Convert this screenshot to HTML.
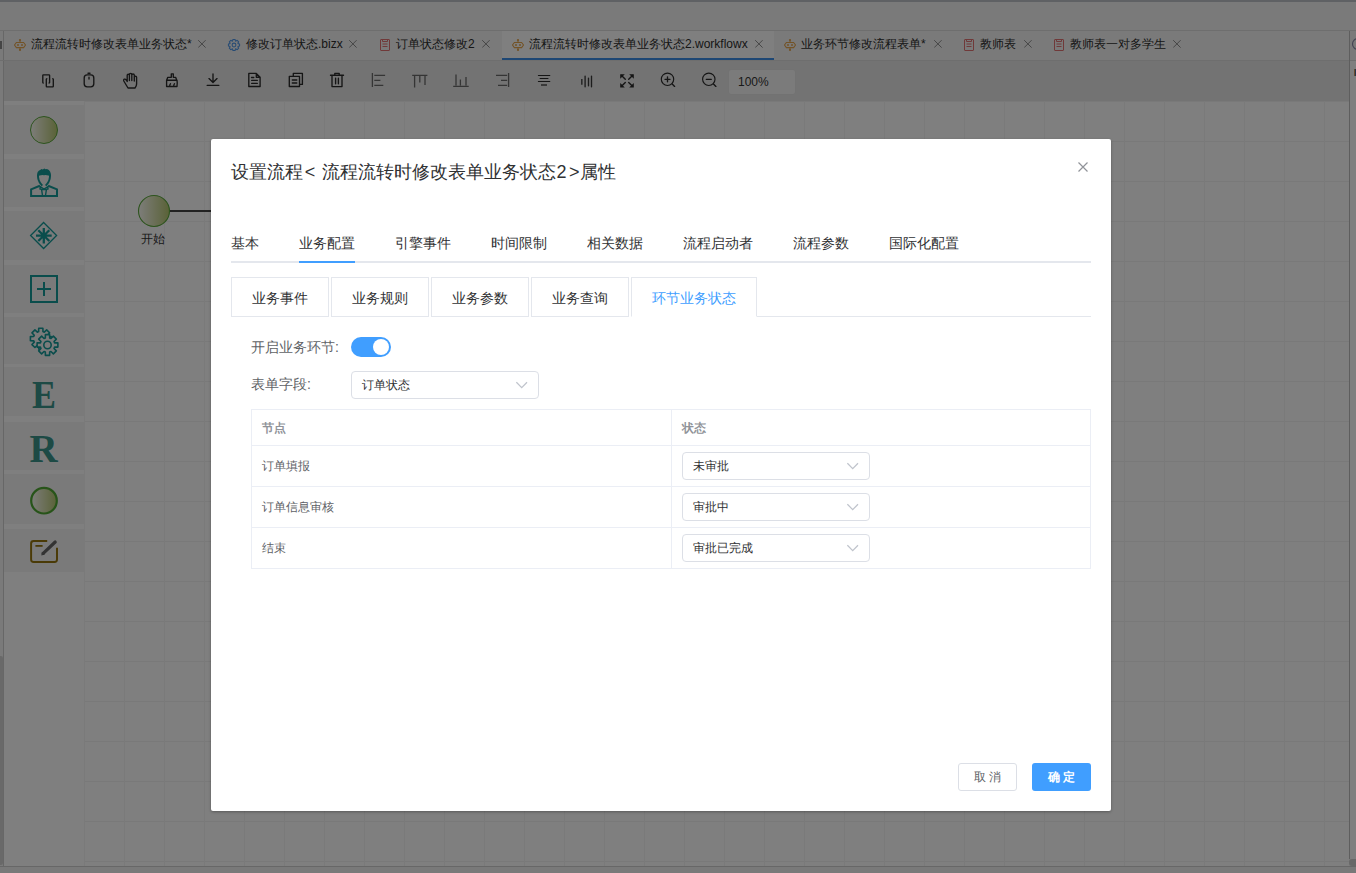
<!DOCTYPE html>
<html><head><meta charset="utf-8">
<style>
*{box-sizing:border-box;margin:0;padding:0}
html,body{width:1356px;height:873px;overflow:hidden;background:#fff;font-family:"Liberation Sans",sans-serif;}
.a{position:absolute}
#app{position:absolute;left:0;top:0;width:1356px;height:873px;background:#f5f5f5}
.tab{position:absolute;top:31px;height:29px;font-size:13px;color:#333;white-space:nowrap;line-height:29px}
.tab .t{position:absolute;top:0}
.tab .x{position:absolute;top:10px;width:9px;height:9px}
.tt{font-size:12px;color:#2e2e2e;white-space:nowrap;line-height:18px}
.tb{position:absolute;top:73px;width:16px;height:16px}
.grid{position:absolute;left:4px;top:101px;width:1345px;height:766px;background-color:#fff;
 background-image:linear-gradient(to right,#f4f4f4 1px,transparent 1px),linear-gradient(to bottom,#f2f2f2 1px,transparent 1px);
 background-size:40px 40px;background-position:0px 0px}
.pal{position:absolute;left:4px;top:101px;width:80px;height:766px;background:#fefefe}
.pi{position:absolute;left:4px;width:80px;height:48px;background:#f4f4f4}
#mask{position:absolute;left:0;top:0;width:1356px;height:873px;background:rgba(0,0,0,.5)}
#dlg{position:absolute;left:211px;top:139px;width:900px;height:672px;background:#fff;border-radius:2px;box-shadow:0 1px 3px rgba(0,0,0,.3)}
.mt{position:absolute;top:94px;font-size:14px;color:#303133;line-height:20px;white-space:nowrap}
.st{position:absolute;top:138px;height:40px;border:1px solid #e4e7ed;font-size:14px;color:#303133;line-height:40px;text-align:center;white-space:nowrap}
.lbl{position:absolute;font-size:14px;color:#606266;white-space:nowrap}
.sel{position:absolute;width:188px;height:28px;border:1px solid #dcdfe6;border-radius:4px;background:#fff;font-size:12px;color:#303133;line-height:26px;padding-left:10px;white-space:nowrap}
.sel svg{position:absolute;right:10px;top:9px}
.cell{position:absolute;font-size:12px;color:#606266;white-space:nowrap}
.c{font-style:normal;display:inline-block;width:1em;text-align:center}
</style></head><body>
<div id="app">
  <div class="a" style="left:0;top:0;width:1356px;height:2px;background:#bfc3c9"></div>
  <div class="a" style="left:0;top:30px;width:1356px;height:1px;background:#dcdcdc"></div>
  <!-- tabbar -->
  <div class="a" style="left:3px;top:31px;width:1px;height:836px;background:#cfcfcf"></div>
  <div class="a" style="left:0;top:60px;width:1356px;height:1px;background:#dcdcdc"></div>
  <div class="a" style="left:502px;top:31px;width:272px;height:29px;background:#fff"></div>
  <div class="a" style="left:502px;top:58px;width:272px;height:2px;background:#3c8fe8"></div>
  
  <!-- tabs --><svg class="a" style="left:14px;top:39px" width="12" height="12" viewBox="0 0 12 12"><g fill="none" stroke="#e6a64e" stroke-width="1.05"><path d="M2.4 3.4H9.6L11.5 6L9.6 8.6H2.4L0.5 6Z"/><path d="M6 1V3.4M6 8.6V11"/></g><circle cx="6" cy="1.1" r="1.1" fill="#e6a64e"/><circle cx="6" cy="10.9" r="1.1" fill="#e6a64e"/><circle cx="4" cy="6" r="1" fill="#e6a64e"/><circle cx="8" cy="6" r="1" fill="#e6a64e"/></svg><div class="a tt" style="left:31px;top:35px"><i class="c">流</i><i class="c">程</i><i class="c">流</i><i class="c">转</i><i class="c">时</i><i class="c">修</i><i class="c">改</i><i class="c">表</i><i class="c">单</i><i class="c">业</i><i class="c">务</i><i class="c">状</i><i class="c">态</i>*</div><svg class="a" style="left:198.3px;top:40.3px" width="8" height="8" viewBox="0 0 8 8"><path d="M0.2 0.2L7.6 7.6M7.6 0.2L0.2 7.6" stroke="#8c8c8c" stroke-width="1"/></svg><svg class="a" style="left:227px;top:38px" width="14" height="14" viewBox="0 0 14 14"><path d="M5.62 2.93 L5.91 1.41 L8.09 1.41 L8.38 2.93 L8.91 3.15 L10.18 2.27 L11.73 3.82 L10.85 5.09 L11.07 5.62 L12.59 5.91 L12.59 8.09 L11.07 8.38 L10.85 8.91 L11.73 10.18 L10.18 11.73 L8.91 10.85 L8.38 11.07 L8.09 12.59 L5.91 12.59 L5.62 11.07 L5.09 10.85 L3.82 11.73 L2.27 10.18 L3.15 8.91 L2.93 8.38 L1.41 8.09 L1.41 5.91 L2.93 5.62 L3.15 5.09 L2.27 3.82 L3.82 2.27 L5.09 3.15Z" fill="none" stroke="#4f97e8" stroke-width="1.05" stroke-linejoin="round"/><circle cx="7" cy="7" r="1.9" fill="none" stroke="#4f97e8" stroke-width="1.05"/></svg><div class="a tt" style="left:246px;top:35px"><i class="c">修</i><i class="c">改</i><i class="c">订</i><i class="c">单</i><i class="c">状</i><i class="c">态</i>.bizx</div><svg class="a" style="left:349.3px;top:40.3px" width="8" height="8" viewBox="0 0 8 8"><path d="M0.2 0.2L7.6 7.6M7.6 0.2L0.2 7.6" stroke="#8c8c8c" stroke-width="1"/></svg><svg class="a" style="left:380px;top:39px" width="10" height="12" viewBox="0 0 10 12"><g fill="none" stroke="#e07272" stroke-width="1"><rect x="0.5" y="0.5" width="9" height="11" rx="0.5"/><path d="M2.5 0.5V2.5H7.5V0.5"/><path d="M2.5 5H7.5M2.5 7.5H7.5"/></g></svg><div class="a tt" style="left:396px;top:35px"><i class="c">订</i><i class="c">单</i><i class="c">状</i><i class="c">态</i><i class="c">修</i><i class="c">改</i>2</div><svg class="a" style="left:482.3px;top:40.3px" width="8" height="8" viewBox="0 0 8 8"><path d="M0.2 0.2L7.6 7.6M7.6 0.2L0.2 7.6" stroke="#8c8c8c" stroke-width="1"/></svg><svg class="a" style="left:512px;top:39px" width="12" height="12" viewBox="0 0 12 12"><g fill="none" stroke="#e6a64e" stroke-width="1.05"><path d="M2.4 3.4H9.6L11.5 6L9.6 8.6H2.4L0.5 6Z"/><path d="M6 1V3.4M6 8.6V11"/></g><circle cx="6" cy="1.1" r="1.1" fill="#e6a64e"/><circle cx="6" cy="10.9" r="1.1" fill="#e6a64e"/><circle cx="4" cy="6" r="1" fill="#e6a64e"/><circle cx="8" cy="6" r="1" fill="#e6a64e"/></svg><div class="a tt" style="left:529px;top:35px"><i class="c">流</i><i class="c">程</i><i class="c">流</i><i class="c">转</i><i class="c">时</i><i class="c">修</i><i class="c">改</i><i class="c">表</i><i class="c">单</i><i class="c">业</i><i class="c">务</i><i class="c">状</i><i class="c">态</i>2.workflowx</div><svg class="a" style="left:755.3px;top:40.3px" width="8" height="8" viewBox="0 0 8 8"><path d="M0.2 0.2L7.6 7.6M7.6 0.2L0.2 7.6" stroke="#8c8c8c" stroke-width="1"/></svg><svg class="a" style="left:784px;top:39px" width="12" height="12" viewBox="0 0 12 12"><g fill="none" stroke="#e6a64e" stroke-width="1.05"><path d="M2.4 3.4H9.6L11.5 6L9.6 8.6H2.4L0.5 6Z"/><path d="M6 1V3.4M6 8.6V11"/></g><circle cx="6" cy="1.1" r="1.1" fill="#e6a64e"/><circle cx="6" cy="10.9" r="1.1" fill="#e6a64e"/><circle cx="4" cy="6" r="1" fill="#e6a64e"/><circle cx="8" cy="6" r="1" fill="#e6a64e"/></svg><div class="a tt" style="left:801px;top:35px"><i class="c">业</i><i class="c">务</i><i class="c">环</i><i class="c">节</i><i class="c">修</i><i class="c">改</i><i class="c">流</i><i class="c">程</i><i class="c">表</i><i class="c">单</i>*</div><svg class="a" style="left:934.3px;top:40.3px" width="8" height="8" viewBox="0 0 8 8"><path d="M0.2 0.2L7.6 7.6M7.6 0.2L0.2 7.6" stroke="#8c8c8c" stroke-width="1"/></svg><svg class="a" style="left:964px;top:39px" width="10" height="12" viewBox="0 0 10 12"><g fill="none" stroke="#e07272" stroke-width="1"><rect x="0.5" y="0.5" width="9" height="11" rx="0.5"/><path d="M2.5 0.5V2.5H7.5V0.5"/><path d="M2.5 5H7.5M2.5 7.5H7.5"/></g></svg><div class="a tt" style="left:980px;top:35px"><i class="c">教</i><i class="c">师</i><i class="c">表</i></div><svg class="a" style="left:1024.3px;top:40.3px" width="8" height="8" viewBox="0 0 8 8"><path d="M0.2 0.2L7.6 7.6M7.6 0.2L0.2 7.6" stroke="#8c8c8c" stroke-width="1"/></svg><svg class="a" style="left:1054px;top:39px" width="10" height="12" viewBox="0 0 10 12"><g fill="none" stroke="#e07272" stroke-width="1"><rect x="0.5" y="0.5" width="9" height="11" rx="0.5"/><path d="M2.5 0.5V2.5H7.5V0.5"/><path d="M2.5 5H7.5M2.5 7.5H7.5"/></g></svg><div class="a tt" style="left:1070px;top:35px"><i class="c">教</i><i class="c">师</i><i class="c">表</i><i class="c">一</i><i class="c">对</i><i class="c">多</i><i class="c">学</i><i class="c">生</i></div><svg class="a" style="left:1173.3px;top:40.3px" width="8" height="8" viewBox="0 0 8 8"><path d="M0.2 0.2L7.6 7.6M7.6 0.2L0.2 7.6" stroke="#8c8c8c" stroke-width="1"/></svg><div class="a" style="left:0;top:41px;width:2px;height:8px;background:#8a8a8a"></div>
  <!-- toolbar -->
  <div class="a" style="left:4px;top:61px;width:1345px;height:40px;background:#e6e6e6"></div>
  <div class="a" style="left:728px;top:69px;width:68px;height:26px;background:#f7f7f7;border:1px solid #e4e4e4;border-radius:3px;font-size:12px;color:#333;line-height:24px;padding-left:9px">100%</div><svg class="a" style="left:0;top:61px" width="800" height="40" viewBox="0 61 800 40">
<g fill="none" stroke="#2a2a2a" stroke-width="1.35" stroke-linejoin="round" stroke-linecap="round">
<path d="M43.2 83 L42.8 82.6 V75.4 Q42.8 74.8 43.4 74.8 H49 Q49.6 74.8 49.6 75.4 V82.6 L49.1 83.1"/>
<path d="M46.8 78.8 L46.3 79.3 V86.3 Q46.3 86.9 46.9 86.9 H52.7 Q53.3 86.9 53.3 86.3 V79.3 L52.8 78.8"/>
<rect x="84.2" y="74.9" width="9.6" height="11.9" rx="3"/>
<path d="M88 73.2 H90 M89 77.2 V79"/>
<path d="M127.2 81.5 V75.2 Q127.2 74.2 128.3 74.2 Q129.4 74.2 129.4 75.2 V80.5 M129.4 75 Q129.4 73.3 130.6 73.3 Q131.8 73.3 131.8 75 V80.5 M131.8 75 Q131.8 74 133 74 Q134.3 74 134.3 75 V81 M134.3 77 Q134.3 76.2 135.4 76.2 Q136.6 76.2 136.6 77.2 V84 Q136.6 86 135 88 H128 L123.8 81 Q123.3 79.5 124.5 79.2 Q125.5 79 126.2 80 L127.2 81.5"/>
<path d="M171.3 77.3 V73.8 H173.3 V77.3 H175.6 L176.8 80.2 H166.6 L167.8 77.3 Z M166.6 80.2 V86.5 H177 Q177.5 83 177 80.2 M169.6 86.5 Q169.8 84.5 170.5 83.8 M173.6 86.5 Q173.8 84.5 174.5 83.8"/>
<path d="M213 74 V82.3 M209 78.6 L213 82.6 L217 78.6 M207.2 85.4 H218.8"/>
<path d="M248.8 73.4 H256.3 L260.1 77.2 V86.5 H248.8 Z M256.3 73.4 V77.2 H260.1 M251.5 77.5 H253.8 M251.7 80.4 H257.3 M251.7 83.4 H257.3"/>
<path d="M293.3 76.4 V73.4 H302.4 V84.4 H299.5 M289.3 76.4 H299.5 V86.5 H289.3 Z M292.3 80 H296.8 M292.3 83 H296.8"/>
<path d="M330.5 75.2 H343.5 M334.8 75.2 V73.3 H339.2 V75.2 M332 75.2 V86.6 H342 V75.2 M335.6 78.2 V83.8 M338.4 78.2 V83.8"/>
<path d="M538.4 75.5 H549.8 M540.1 78.5 H548 M538.4 81.5 H549.8" stroke-width="1.1"/>
<path d="M585.1 76.1 V86.8 M588.5 78.1 V85.8 M591.5 76.1 V86.8" stroke="#3a3a3a"/>
<circle cx="667.5" cy="79.3" r="6.2" stroke-width="1.15"/>
<path d="M665 79.3 H670 M667.5 76.8 V81.8 M672.2 84 L674.6 86.4"/>
<circle cx="708.8" cy="79.3" r="6.2" stroke-width="1.15"/>
<path d="M706.3 79.3 H711.3 M713.5 84 L715.9 86.4"/>
<path d="M621.5 75.5 L625.3 79.3 M632.5 75.5 L628.7 79.3 M621.5 86.2 L625.3 82.4 M632.5 86.2 L628.7 82.4"/>
</g>
<g fill="#2a2a2a">
<path d="M620.2 74.2 H624.8 L620.2 78.8Z M633.8 74.2 H629.2 L633.8 78.8Z M620.2 87.5 H624.8 L620.2 82.9Z M633.8 87.5 H629.2 L633.8 82.9Z"/>
</g>
<g fill="none" stroke="#6a6a6a" stroke-width="1.3" stroke-linecap="butt">
<path d="M372.4 73 V87 M374.3 75.3 H385.1 M374.3 80.4 H380.4 M374.3 85.3 H383.3"/>
<path d="M412.2 75.3 H427.4 M414.6 76 V87.5 M419.8 76 V82.5 M425 76 V85"/>
<path d="M453.2 86.3 H468.7 M456 74.5 V85.6 M460.4 79.5 V85.6 M466 77 V85.6"/>
<path d="M508.6 73 V87 M496 75.3 H507.2 M501 80.4 H507.2 M498 85.3 H507.2"/>
<path d="M541 85 H547" stroke="#555" stroke-width="1.6"/>
<path d="M581.8 79.1 V84.8" stroke="#555" stroke-width="1.6"/>
</g>
</svg>
  <!-- canvas -->
  <div class="grid"></div>
  <div class="pal"></div><div class="pi" style="top:105px;height:49px"></div><div class="pi" style="top:159px;height:48px"></div><div class="pi" style="top:211px;height:49px"></div><div class="pi" style="top:265px;height:48px"></div><div class="pi" style="top:317px;height:47px"></div><div class="pi" style="top:367px;height:49px"></div><div class="pi" style="top:422px;height:48px"></div><div class="pi" style="top:474px;height:50px"></div><div class="pi" style="top:529px;height:43px"></div><svg class="a" style="left:4px;top:101px" width="81" height="480" viewBox="4 101 81 480">
<defs><linearGradient id="g1" x1="0" y1="0" x2="1" y2="0"><stop offset="0" stop-color="#fbfbf5"/><stop offset="1" stop-color="#b4c46e"/></linearGradient></defs>
<circle cx="44" cy="130" r="13.5" fill="url(#g1)" stroke="#5aa83c" stroke-width="1"/>
<g fill="none" stroke="#159a98" stroke-width="2">
<path d="M38 175 Q37.7 180.5 41.2 184.3 L42.3 185.6 M50 175 Q50.3 180.5 46.8 184.3 L45.7 185.6" stroke-width="1.9"/>
<path d="M39.9 185.8 L31.1 189.4 V196 H57 V189.4 L48.1 185.8" stroke-width="2"/>
<path d="M40.2 186.7 L44 189.2 L47.8 186.7 L48 189 L46 189.6 L44 189.2 L42 189.6 L40 189 Z" stroke-width="1.4"/>
<path d="M41.6 189.6 L42.6 196 M46.4 189.6 L45.4 196" stroke-width="1.4"/>
<path d="M43.6 222.5 L56.6 235.5 L43.6 248.5 L30.6 235.5Z" stroke-width="1.3"/>
<rect x="31" y="276" width="26" height="26" stroke-width="2"/>
<path d="M37 289 H51 M44 282 V296" stroke-width="2"/>
</g>
<path d="M37 176.8 Q36.6 171 40.5 169.8 L41.6 168.9 L42.8 169.4 L44.3 168.6 L45.6 169.3 L47 169.1 Q51.4 170.6 51 176.8 Q47.8 174.6 44 175.2 Q40.2 174.6 37 176.8Z" fill="#159a98"/>
<path d="M43.8 228 V243.5 M36 235.6 H51.7 M38.3 230.2 L49.3 241 M49.3 230.2 L38.3 241" stroke="#159a98" stroke-width="2.3"/>
<path d="M38.63 331.62 L38.71 328.31 L42.89 328.31 L42.97 331.62 L44.27 332.16 L46.67 329.88 L49.62 332.83 L47.34 335.23 L47.88 336.53 L51.19 336.61 L51.19 340.79 L47.88 340.87 L47.34 342.17 L49.62 344.57 L46.67 347.52 L44.27 345.24 L42.97 345.78 L42.89 349.09 L38.71 349.09 L38.63 345.78 L37.33 345.24 L34.93 347.52 L31.98 344.57 L34.26 342.17 L33.72 340.87 L30.41 340.79 L30.41 336.61 L33.72 336.53 L34.26 335.23 L31.98 332.83 L34.93 329.88 L37.33 332.16Z" fill="none" stroke="#159a98" stroke-width="1.6" stroke-linejoin="round"/>
<path d="M45.33 337.92 L45.41 334.61 L49.59 334.61 L49.67 337.92 L50.97 338.46 L53.37 336.18 L56.32 339.13 L54.04 341.53 L54.58 342.83 L57.89 342.91 L57.89 347.09 L54.58 347.17 L54.04 348.47 L56.32 350.87 L53.37 353.82 L50.97 351.54 L49.67 352.08 L49.59 355.39 L45.41 355.39 L45.33 352.08 L44.03 351.54 L41.63 353.82 L38.68 350.87 L40.96 348.47 L40.42 347.17 L37.11 347.09 L37.11 342.91 L40.42 342.83 L40.96 341.53 L38.68 339.13 L41.63 336.18 L44.03 338.46Z" fill="#f4f4f4" stroke="#159a98" stroke-width="1.6" stroke-linejoin="round"/>
<circle cx="47.5" cy="345" r="3.7" fill="none" stroke="#159a98" stroke-width="1.6"/>
<text x="0" y="0" transform="translate(44,408) scale(0.9,1)" text-anchor="middle" font-family="Liberation Serif" font-weight="bold" font-size="40" fill="#3a958a">E</text>
<text x="43.5" y="461.5" text-anchor="middle" font-family="Liberation Serif" font-weight="bold" font-size="39" fill="#3a958a">R</text>
<defs><linearGradient id="g2" x1="0" y1="0" x2="1" y2="0"><stop offset="0" stop-color="#fbfbf5"/><stop offset="1" stop-color="#b4c46e"/></linearGradient></defs>
<circle cx="44" cy="500.7" r="12.8" fill="url(#g2)" stroke="#4fa832" stroke-width="2.2"/>
<g fill="none" stroke="#94740c" stroke-width="1.95">
<path d="M47.2 541 H33.6 Q31.1 541 31.1 543.5 V559.4 Q31.1 561.9 33.6 561.9 H54.5 Q57 561.9 57 559.4 V547.8"/>
<path d="M35.4 545.9 H42.6" stroke-width="1.8"/>
</g>
<path d="M43.2 553.3 L55.2 542" stroke="#666" stroke-width="3.2" stroke-linecap="round"/><path d="M41.3 555.5 L41.9 551.8 L44.9 554.6Z" fill="#666"/>
</svg><svg class="a" style="left:130px;top:190px" width="90" height="40" viewBox="130 190 90 40">
<defs><linearGradient id="g3" x1="0" y1="0" x2="1" y2="0"><stop offset="0" stop-color="#fbfbf5"/><stop offset="1" stop-color="#b4c46e"/></linearGradient></defs>
<path d="M169 211 H212" stroke="#444" stroke-width="2"/>
<circle cx="154" cy="211" r="15.5" fill="url(#g3)" stroke="#5aa83c" stroke-width="1.1"/>
</svg>
<div class="a" style="left:141px;top:231px;font-size:12px;color:#333;line-height:16px"><i class="c">开</i><i class="c">始</i></div>
  <div class="a" style="left:1350px;top:61px;width:6px;height:806px;background:#fff"></div>
  <div class="a" style="left:1349px;top:31px;width:1px;height:828px;background:#bdbdbd"></div>
  <div class="a" style="left:0;top:866px;width:1356px;height:1px;background:#cfcfcf"></div>
  <div class="a" style="left:0;top:867px;width:1356px;height:6px;background:#f2f2f2"></div>
<svg class="a" style="left:1351px;top:37px" width="5" height="14" viewBox="0 0 5 14"><circle cx="7" cy="7" r="5.5" fill="none" stroke="#8a8aa8" stroke-width="1.2"/></svg>
  <div class="a" style="left:1354px;top:69px;width:2px;height:7px;background:#506a90;border-left:1px solid #d09a60"></div>
  <div class="a" style="left:0;top:656px;width:3px;height:209px;background:#d2d2d2;border-radius:0 2px 2px 0"></div>
  <div class="a" style="left:1349px;top:859px;width:7px;height:7px;background:#d0d0d0;border-radius:3px 0 0 3px"></div>
</div>
<div id="mask"></div>
<div id="dlg">
  <div class="a" style="left:20px;top:20.5px;font-size:18px;color:#303133;line-height:24px;white-space:nowrap"><i class="c">设</i><i class="c">置</i><i class="c">流</i><i class="c">程</i><span style="display:inline-block;width:19px;padding-left:1.8px">&lt;</span><i class="c">流</i><i class="c">程</i><i class="c">流</i><i class="c">转</i><i class="c">时</i><i class="c">修</i><i class="c">改</i><i class="c">表</i><i class="c">单</i><i class="c">业</i><i class="c">务</i><i class="c">状</i><i class="c">态</i><span style="display:inline-block;width:23.5px;letter-spacing:2.5px;padding-left:0.5px">2&gt;</span><i class="c">属</i><i class="c">性</i></div>
  <svg class="a" style="left:867px;top:23px" width="10" height="10" viewBox="0 0 10 10"><path d="M0.5 0.5L9.5 9.5M9.5 0.5L0.5 9.5" stroke="#909399" stroke-width="1.2"/></svg>
  <!-- main tabs -->
  <div class="a" style="left:20px;top:122px;width:860px;height:2px;background:#e4e7ed"></div>
  <div class="a" style="left:88px;top:122px;width:56px;height:2px;background:#409eff"></div>
  <div class="mt" style="left:20px"><i class="c">基</i><i class="c">本</i></div>
  <div class="mt" style="left:88px"><i class="c">业</i><i class="c">务</i><i class="c">配</i><i class="c">置</i></div>
  <div class="mt" style="left:184px"><i class="c">引</i><i class="c">擎</i><i class="c">事</i><i class="c">件</i></div>
  <div class="mt" style="left:280px"><i class="c">时</i><i class="c">间</i><i class="c">限</i><i class="c">制</i></div>
  <div class="mt" style="left:376px"><i class="c">相</i><i class="c">关</i><i class="c">数</i><i class="c">据</i></div>
  <div class="mt" style="left:472px"><i class="c">流</i><i class="c">程</i><i class="c">启</i><i class="c">动</i><i class="c">者</i></div>
  <div class="mt" style="left:582px"><i class="c">流</i><i class="c">程</i><i class="c">参</i><i class="c">数</i></div>
  <div class="mt" style="left:678px"><i class="c">国</i><i class="c">际</i><i class="c">化</i><i class="c">配</i><i class="c">置</i></div>
  <!-- sub tabs -->
  <div class="a" style="left:546px;top:177px;width:334px;height:1px;background:#e4e7ed"></div>
  <div class="st" style="left:20px;width:98px"><i class="c">业</i><i class="c">务</i><i class="c">事</i><i class="c">件</i></div>
  <div class="st" style="left:120px;width:98px"><i class="c">业</i><i class="c">务</i><i class="c">规</i><i class="c">则</i></div>
  <div class="st" style="left:220px;width:98px"><i class="c">业</i><i class="c">务</i><i class="c">参</i><i class="c">数</i></div>
  <div class="st" style="left:320px;width:98px"><i class="c">业</i><i class="c">务</i><i class="c">查</i><i class="c">询</i></div>
  <div class="st" style="left:420px;width:126px;border-bottom-color:#fff;color:#409eff"><i class="c">环</i><i class="c">节</i><i class="c">业</i><i class="c">务</i><i class="c">状</i><i class="c">态</i></div>
  <!-- form -->
  <div class="lbl" style="left:40px;top:198px;line-height:20px"><i class="c">开</i><i class="c">启</i><i class="c">业</i><i class="c">务</i><i class="c">环</i><i class="c">节</i>:</div>
  <div class="a" style="left:140px;top:198px;width:40px;height:20px;border-radius:10px;background:#409eff"></div>
  <div class="a" style="left:162px;top:200px;width:16px;height:16px;border-radius:8px;background:#fff"></div>
  <div class="lbl" style="left:40px;top:235px;line-height:20px"><i class="c">表</i><i class="c">单</i><i class="c">字</i><i class="c">段</i>:</div>
  <div class="sel" style="left:140px;top:232px"><i class="c">订</i><i class="c">单</i><i class="c">状</i><i class="c">态</i><svg width="12" height="8" viewBox="0 0 12 8"><path d="M0.4 1.2L5.7 6.6L11 1.2" fill="none" stroke="#c0c4cc" stroke-width="1.25"/></svg></div>
  <!-- table -->
  <div class="a" style="left:40px;top:270px;width:840px;height:160px;border:1px solid #ebeef5"></div>
  <div class="a" style="left:460px;top:270px;width:1px;height:160px;background:#ebeef5"></div>
  <div class="a" style="left:40px;top:306px;width:840px;height:1px;background:#ebeef5"></div>
  <div class="a" style="left:40px;top:347px;width:840px;height:1px;background:#ebeef5"></div>
  <div class="a" style="left:40px;top:388px;width:840px;height:1px;background:#ebeef5"></div>
  <div class="cell" style="left:51px;top:281px;line-height:17px;color:#909399;font-weight:bold"><i class="c">节</i><i class="c">点</i></div>
  <div class="cell" style="left:471px;top:281px;line-height:17px;color:#909399;font-weight:bold"><i class="c">状</i><i class="c">态</i></div>
  <div class="cell" style="left:51px;top:319px;line-height:17px"><i class="c">订</i><i class="c">单</i><i class="c">填</i><i class="c">报</i></div>
  <div class="cell" style="left:51px;top:360px;line-height:17px"><i class="c">订</i><i class="c">单</i><i class="c">信</i><i class="c">息</i><i class="c">审</i><i class="c">核</i></div>
  <div class="cell" style="left:51px;top:401px;line-height:17px"><i class="c">结</i><i class="c">束</i></div>
  <div class="sel" style="left:471px;top:313px"><i class="c">未</i><i class="c">审</i><i class="c">批</i><svg width="12" height="8" viewBox="0 0 12 8"><path d="M0.4 1.2L5.7 6.6L11 1.2" fill="none" stroke="#c0c4cc" stroke-width="1.25"/></svg></div>
  <div class="sel" style="left:471px;top:354px"><i class="c">审</i><i class="c">批</i><i class="c">中</i><svg width="12" height="8" viewBox="0 0 12 8"><path d="M0.4 1.2L5.7 6.6L11 1.2" fill="none" stroke="#c0c4cc" stroke-width="1.25"/></svg></div>
  <div class="sel" style="left:471px;top:395px"><i class="c">审</i><i class="c">批</i><i class="c">已</i><i class="c">完</i><i class="c">成</i><svg width="12" height="8" viewBox="0 0 12 8"><path d="M0.4 1.2L5.7 6.6L11 1.2" fill="none" stroke="#c0c4cc" stroke-width="1.25"/></svg></div>
  <!-- footer -->
  <div class="a" style="left:747px;top:624px;width:59px;height:28px;border:1px solid #dcdfe6;border-radius:3px;font-size:12px;color:#606266;line-height:26px;text-align:center;white-space:nowrap"><i class="c">取</i> <i class="c">消</i></div>
  <div class="a" style="left:821px;top:624px;width:59px;height:28px;border-radius:3px;background:#409eff;font-size:12px;color:#fff;line-height:28px;text-align:center;white-space:nowrap;font-weight:bold"><i class="c">确</i> <i class="c">定</i></div>
</div>
</body></html>
